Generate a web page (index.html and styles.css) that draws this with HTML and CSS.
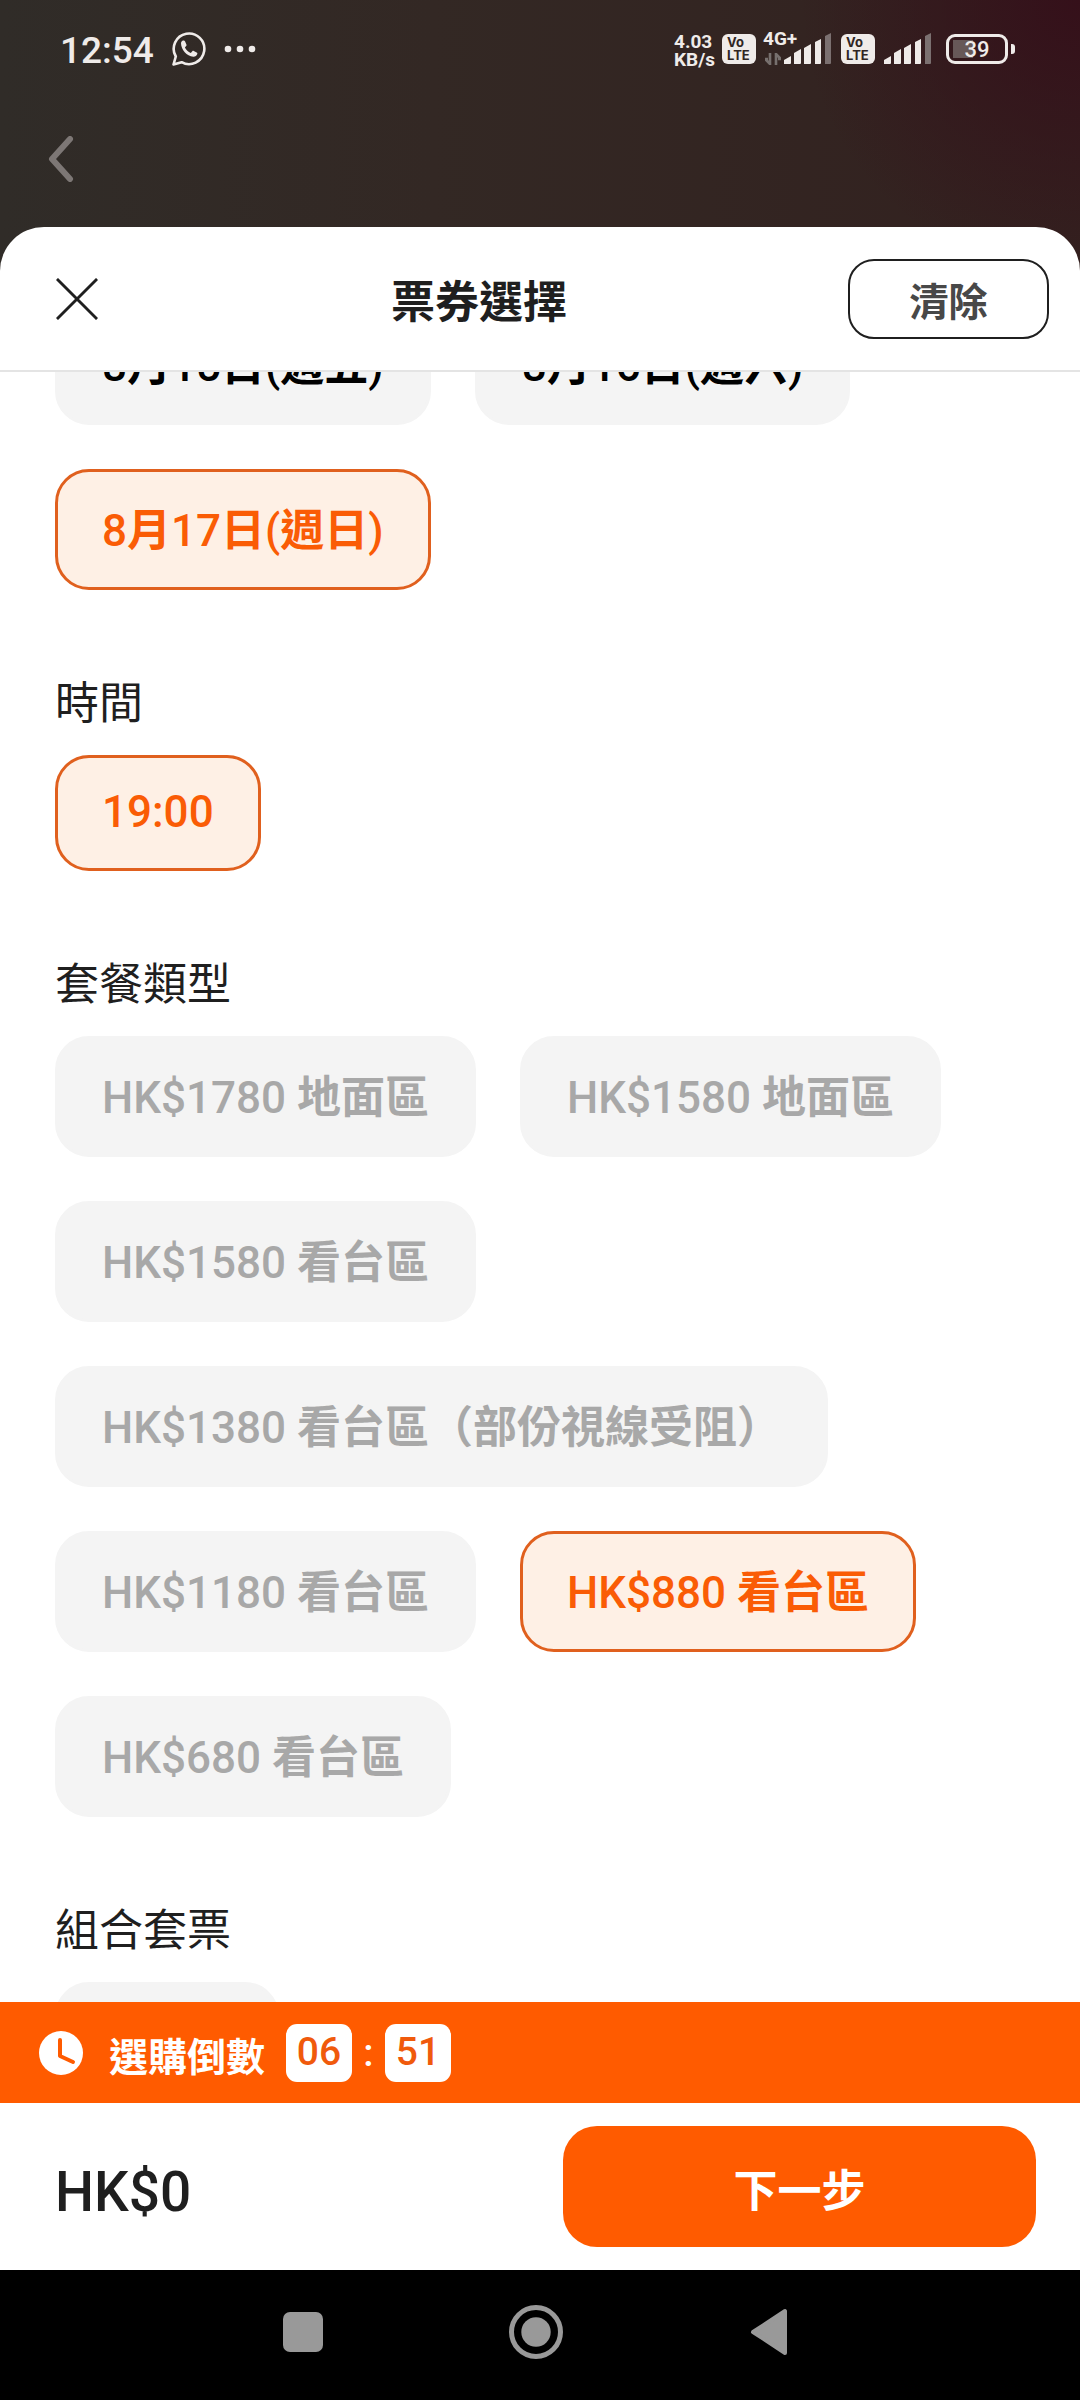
FILE: index.html
```html
<!DOCTYPE html>
<html lang="zh-Hant">
<head>
<meta charset="utf-8">
<meta name="viewport" content="width=device-width, initial-scale=1">
<title>票券選擇</title>
<link rel="stylesheet" href="styles.css">
</head>
<body>
<div class="screen">
  <div class="status-bar">
    <div class="status-left">
      <span class="clock">12:54</span>
      <svg class="whatsapp" viewBox="0 0 34 34" aria-hidden="true">
        <path d="M1.500 32.500 3.800 24.500A15.300 15.300 0 1 1 9.600 30.200Z" fill="none" stroke="#efebe9" stroke-width="2.600" stroke-linejoin="round"/>
        <path d="M9 11.500c0-1.500 1-2.600 2.200-2.900.8-.2 1.500 0 1.900.9l1.300 2.900c.3.700.1 1.200-.3 1.700l-1.200 1.400c1.300 2.500 3.200 4.300 5.900 5.500l1.500-1.700c.4-.5.900-.6 1.500-.3l2.800 1.400c.8.400.9.800.7 1.600-.4 1.700-2.200 2.800-4 2.700C14.700 24.200 9.200 17.700 9 11.500Z" fill="#efebe9"/>
      </svg>
      <svg class="more" viewBox="0 0 32 8" aria-hidden="true"><g fill="#efebe9"><circle cx="4" cy="4" r="3.300"/><circle cx="16" cy="4" r="3.300"/><circle cx="28" cy="4" r="3.300"/></g></svg>
    </div>
    <div class="status-right">
      <span class="speed"><span>4.03</span><span>KB/s</span></span>
      <span class="volte"><span>Vo</span><span>LTE</span></span>
      <span class="network">
        <span class="network-type">4G+</span>
        <svg class="arrows" viewBox="0 0 16 12" aria-hidden="true"><path d="M5 0v11L0 6h3M11 12V1l5 5h-3" fill="none" stroke="#77706e" stroke-width="2.600"/></svg>
        <svg class="signal" viewBox="0 0 48 32" aria-hidden="true"><g fill="#efebe9"><path d="M0 31v-4l7-4v7q0 1-1 1Z"/><path d="M10 31V20l7-4v14q0 1-1 1Z"/><path d="M20 31V15l7-4v19q0 1-1 1Z"/><path d="M31 31V9l6-3v24q0 1-1 1Z"/></g><path d="M41 31V3l6-3v30q0 1-1 1Z" fill="#7b7070"/></svg>
      </span>
      <span class="volte"><span>Vo</span><span>LTE</span></span>
      <svg class="signal" viewBox="0 0 48 32" aria-hidden="true"><g fill="#efebe9"><path d="M0 31v-4l7-4v7q0 1-1 1Z"/><path d="M10 31V20l7-4v14q0 1-1 1Z"/><path d="M20 31V15l7-4v19q0 1-1 1Z"/><path d="M31 31V9l6-3v24q0 1-1 1Z"/></g><path d="M41 31V3l6-3v30q0 1-1 1Z" fill="#7b7070"/></svg>
      <span class="battery">39</span>
    </div>
  </div>

  <header class="app-bar">
    <button class="back" type="button" aria-label="返回">
      <svg viewBox="0 0 26 46" aria-hidden="true"><path d="M22 3 4 23 22 43" fill="none" stroke="#7d7775" stroke-width="6" stroke-linecap="round" stroke-linejoin="round"/></svg>
    </button>
  </header>

  <main class="sheet">
    <div class="sheet-header">
      <button class="close" type="button" aria-label="關閉">
        <svg viewBox="0 0 44 44" aria-hidden="true"><path d="M1 1 43 43M43 1 1 43" stroke="#1f1f1f" stroke-width="3"/></svg>
      </button>
      <h1 class="title">票券選擇</h1>
      <button class="clear" type="button">清除</button>
    </div>

    <div class="options">
      <div class="options-list">
        <section class="chips">
          <button class="chip" type="button">8<b>月</b>15<b>日</b>(<b>週五</b>)</button>
          <button class="chip" type="button">8<b>月</b>16<b>日</b>(<b>週六</b>)</button>
          <button class="chip selected" type="button" aria-pressed="true">8<b>月</b>17<b>日</b>(<b>週日</b>)</button>
        </section>
        <section class="group">
          <h2 class="label">時間</h2>
          <div class="chips">
            <button class="chip selected compact" type="button" aria-pressed="true">19:00</button>
          </div>
        </section>
        <section class="group">
          <h2 class="label">套餐類型</h2>
          <div class="chips">
            <button class="chip" type="button" disabled>HK$1780 <b>地面區</b></button>
            <button class="chip" type="button" disabled>HK$1580 <b>地面區</b></button>
            <button class="chip" type="button" disabled>HK$1580 <b>看台區</b></button>
            <button class="chip" type="button" disabled>HK$1380 <b>看台區（部份視線受阻）</b></button>
            <button class="chip" type="button" disabled>HK$1180 <b>看台區</b></button>
            <button class="chip selected" type="button" aria-pressed="true">HK$880 <b>看台區</b></button>
            <button class="chip" type="button" disabled>HK$680 <b>看台區</b></button>
          </div>
        </section>
        <section class="group">
          <h2 class="label">組合套票</h2>
          <div class="chips">
            <button class="chip bundle" type="button" aria-label="組合套票"></button>
          </div>
        </section>
      </div>
    </div>

    <div class="countdown">
      <svg class="timer" viewBox="0 0 44 44" aria-hidden="true"><circle cx="22" cy="22" r="22" fill="#fff"/><path d="M21 9v16l13 6" fill="none" stroke="#ff5b00" stroke-width="4" stroke-linecap="round" stroke-linejoin="round"/></svg>
      <span class="countdown-label">選購倒數</span>
      <span class="digits">06</span>
      <span class="colon">:</span>
      <span class="digits">51</span>
    </div>

    <footer class="checkout">
      <span class="total">HK$0</span>
      <button class="next" type="button">下一步</button>
    </footer>
  </main>

  <nav class="system-nav">
    <button type="button" aria-label="最近使用"><svg viewBox="0 0 54 54" aria-hidden="true"><rect x="7" y="7" width="40" height="40" rx="7" fill="#999"/></svg></button>
    <button type="button" aria-label="主畫面"><svg viewBox="0 0 54 54" aria-hidden="true"><circle cx="27" cy="27" r="24.500" fill="none" stroke="#999" stroke-width="5"/><circle cx="27" cy="27" r="14.700" fill="#999"/></svg></button>
    <button type="button" aria-label="上一頁"><svg viewBox="0 0 54 54" aria-hidden="true"><path d="M43 6v42L11 27Z" fill="#999" stroke="#999" stroke-width="4" stroke-linejoin="round"/></svg></button>
  </nav>
</div>
</body>
</html>
```
FILE: styles.css
```css
* { box-sizing: border-box; }

body {
  margin: 0;
  font-family: Roboto, "Noto Sans CJK TC", sans-serif;
  color: #1f1f1f;
}

button {
  margin: 0;
  padding: 0;
  border: 0;
  background: none;
  font: inherit;
  color: inherit;
}

svg { display: block; }

.screen {
  display: flex;
  flex-direction: column;
  height: 100vh;
  background:
    radial-gradient(circle at 100% 0, #35101a 0, rgba(53, 16, 26, 0) 280px),
    linear-gradient(90deg, #302c28, #332824 40%, #33211f);
}

/* Status bar */
.status-bar {
  display: flex;
  justify-content: space-between;
  align-items: center;
  height: 98px;
  padding: 0 64px 0 60px;
  color: #efebe9;
}

.status-left,
.status-right {
  display: flex;
  align-items: center;
}

.clock {
  padding-top: 2px;
  font-size: 37px;
  font-weight: 500;
}

.whatsapp { width: 34px; height: 34px; margin-left: 18px; }
.more { width: 32px; height: 8px; margin-left: 18px; }

.speed {
  display: grid;
  padding-top: 4px;
  font-size: 19px;
  font-weight: 700;
  line-height: 18px;
}

.volte {
  display: grid;
  align-content: start;
  width: 34px;
  height: 30px;
  padding: 2px 0 0 5px;
  border-radius: 6px;
  background: #efebe9;
  color: #2f2523;
  font-family: Inter, sans-serif;
  font-size: 13px;
  font-weight: 700;
  line-height: 13px;
}

.speed + .volte { margin-left: 7px; }
.network + .volte { margin: 0 9px; }

.network {
  display: grid;
  grid-template-columns: 21px 48px;
  align-items: end;
  margin-left: 7px;
}

.network-type {
  grid-area: 1 / 1;
  align-self: start;
  font-size: 19px;
  font-weight: 700;
  line-height: 12px;
}

.arrows { grid-area: 1 / 1; width: 16px; height: 12px; margin-left: 2px; }
.signal { width: 48px; height: 32px; }
.network .signal { grid-area: 1 / 2; }

.battery {
  position: relative;
  width: 62px;
  height: 30px;
  margin: 0 8px 0 14px;
  border: 3px solid #efebe9;
  border-radius: 9px;
  background: linear-gradient(#675858, #675858) 4px 3px / 20px 18px no-repeat;
  font-size: 22px;
  font-weight: 500;
  line-height: 26px;
  text-align: center;
}

.battery::after {
  content: "";
  position: absolute;
  top: 7px;
  right: -10px;
  width: 4px;
  height: 10px;
  border-radius: 0 3px 3px 0;
  background: #efebe9;
}

/* Page behind the sheet */
.app-bar {
  display: flex;
  align-items: center;
  height: 121px;
  margin-bottom: 8px;
  padding: 0 48px;
}

.back svg { width: 26px; height: 46px; }

/* Sheet */
.sheet {
  display: flex;
  flex: 1;
  flex-direction: column;
  min-height: 0;
  border-radius: 44px 44px 0 0;
  background: #fff;
  overflow: hidden;
}

.sheet-header {
  display: flex;
  align-items: center;
  height: 145px;
  padding: 0 31px 0 44px;
  border-bottom: 2px solid #e4e4e4;
}

.close {
  display: flex;
  justify-content: center;
  width: 66px;
}

.close svg { width: 42px; height: 42px; }

.title {
  flex: 1;
  margin: 0;
  font-size: 44px;
  font-weight: 700;
  text-align: center;
}

.clear {
  width: 201px;
  height: 80px;
  border: 2px solid #1f1f1f;
  border-radius: 26px;
  color: #484848;
  font-size: 39px;
  font-weight: 700;
}

/* Scrolled option list */
.options {
  flex: 1;
  min-height: 0;
  overflow: hidden;
}

.options-list {
  margin-top: -68px;
  padding: 0 55px;
}

.group { padding-top: 82px; }

.label {
  margin: 0 0 19px;
  font-size: 44px;
  font-weight: 400;
  line-height: 64px;
}

.chips {
  display: flex;
  flex-wrap: wrap;
  gap: 44px;
}

.chip {
  height: 121px;
  padding: 2px 44px 0;
  border: 3px solid #f4f4f4;
  border-radius: 34px;
  background: #f4f4f4;
  color: #000;
  font-size: 44px;
  font-weight: 500;
  line-height: 52px;
  white-space: nowrap;
}

.chip:disabled { color: #a8a8a8; }

.chip.selected {
  border-color: #e0601e;
  background: #fef0e5;
  color: #fa5c05;
}

.chip.compact {
  height: 116px;
  padding: 0 44px 2px;
}

.chip.bundle { width: 224px; }

/* Countdown */
.countdown {
  display: flex;
  align-items: center;
  height: 101px;
  padding: 0 39px;
  background: #ff5b00;
  color: #fff;
  font-size: 39px;
  font-weight: 500;
}

.timer { width: 44px; height: 44px; }

.countdown-label {
  margin: 0 21px 0 26px;
  padding-top: 2px;
  font-weight: 700;
}

.digits {
  width: 66px;
  height: 58px;
  border-radius: 11px;
  background: #fff;
  color: #f05a0c;
  line-height: 56px;
  text-align: center;
}

.colon {
  width: 33px;
  text-align: center;
}

/* Checkout */
.checkout {
  display: flex;
  justify-content: space-between;
  align-items: center;
  height: 167px;
  padding: 0 44px 0 55px;
}

.total {
  padding-top: 10px;
  font-size: 55px;
  font-weight: 500;
}

.next {
  width: 473px;
  height: 121px;
  padding-top: 2px;
  border-radius: 34px;
  background: #ff5b00;
  color: #fff;
  font-size: 44px;
  font-weight: 700;
}

/* System navigation */
.system-nav {
  display: flex;
  justify-content: center;
  align-items: center;
  gap: 179px;
  height: 130px;
  padding: 0 8px 6px 0;
  background: #000;
}

.system-nav svg { width: 54px; height: 54px; }
```
